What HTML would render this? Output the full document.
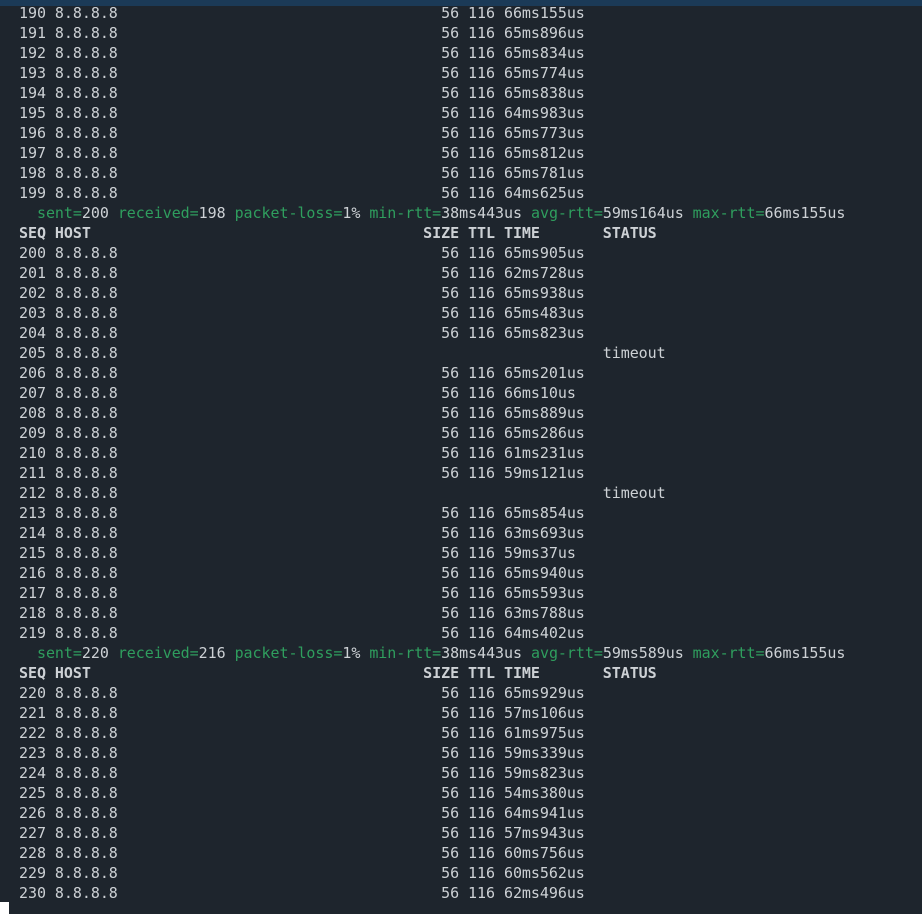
<!DOCTYPE html>
<html><head><meta charset="utf-8"><style>
html,body{margin:0;padding:0;background:#1e252d;width:922px;height:914px;overflow:hidden;}
.bar{position:absolute;left:0;top:0;width:922px;height:6px;background:#1b3a57;}
pre{position:absolute;left:19px;top:3px;margin:0;font-family:"DejaVu Sans Mono","Liberation Mono",monospace;font-size:15px;letter-spacing:-0.05px;line-height:20px;color:#cdd1d5;white-space:pre;}
.g{color:#2f9e5e}
b{font-weight:bold}
.cur{position:absolute;left:0;top:902px;width:9px;height:12px;background:#fff;}
</style></head><body>
<div class="bar"></div>
<pre>190 8.8.8.8                                    56 116 66ms155us
191 8.8.8.8                                    56 116 65ms896us
192 8.8.8.8                                    56 116 65ms834us
193 8.8.8.8                                    56 116 65ms774us
194 8.8.8.8                                    56 116 65ms838us
195 8.8.8.8                                    56 116 64ms983us
196 8.8.8.8                                    56 116 65ms773us
197 8.8.8.8                                    56 116 65ms812us
198 8.8.8.8                                    56 116 65ms781us
199 8.8.8.8                                    56 116 64ms625us
  <span class="g">sent=</span>200 <span class="g">received=</span>198 <span class="g">packet-loss=</span>1% <span class="g">min-rtt=</span>38ms443us <span class="g">avg-rtt=</span>59ms164us <span class="g">max-rtt=</span>66ms155us
<b>SEQ HOST                                     SIZE TTL TIME       STATUS</b>
200 8.8.8.8                                    56 116 65ms905us
201 8.8.8.8                                    56 116 62ms728us
202 8.8.8.8                                    56 116 65ms938us
203 8.8.8.8                                    56 116 65ms483us
204 8.8.8.8                                    56 116 65ms823us
205 8.8.8.8                                                      timeout
206 8.8.8.8                                    56 116 65ms201us
207 8.8.8.8                                    56 116 66ms10us
208 8.8.8.8                                    56 116 65ms889us
209 8.8.8.8                                    56 116 65ms286us
210 8.8.8.8                                    56 116 61ms231us
211 8.8.8.8                                    56 116 59ms121us
212 8.8.8.8                                                      timeout
213 8.8.8.8                                    56 116 65ms854us
214 8.8.8.8                                    56 116 63ms693us
215 8.8.8.8                                    56 116 59ms37us
216 8.8.8.8                                    56 116 65ms940us
217 8.8.8.8                                    56 116 65ms593us
218 8.8.8.8                                    56 116 63ms788us
219 8.8.8.8                                    56 116 64ms402us
  <span class="g">sent=</span>220 <span class="g">received=</span>216 <span class="g">packet-loss=</span>1% <span class="g">min-rtt=</span>38ms443us <span class="g">avg-rtt=</span>59ms589us <span class="g">max-rtt=</span>66ms155us
<b>SEQ HOST                                     SIZE TTL TIME       STATUS</b>
220 8.8.8.8                                    56 116 65ms929us
221 8.8.8.8                                    56 116 57ms106us
222 8.8.8.8                                    56 116 61ms975us
223 8.8.8.8                                    56 116 59ms339us
224 8.8.8.8                                    56 116 59ms823us
225 8.8.8.8                                    56 116 54ms380us
226 8.8.8.8                                    56 116 64ms941us
227 8.8.8.8                                    56 116 57ms943us
228 8.8.8.8                                    56 116 60ms756us
229 8.8.8.8                                    56 116 60ms562us
230 8.8.8.8                                    56 116 62ms496us</pre>
<div class="cur"></div>
</body></html>
